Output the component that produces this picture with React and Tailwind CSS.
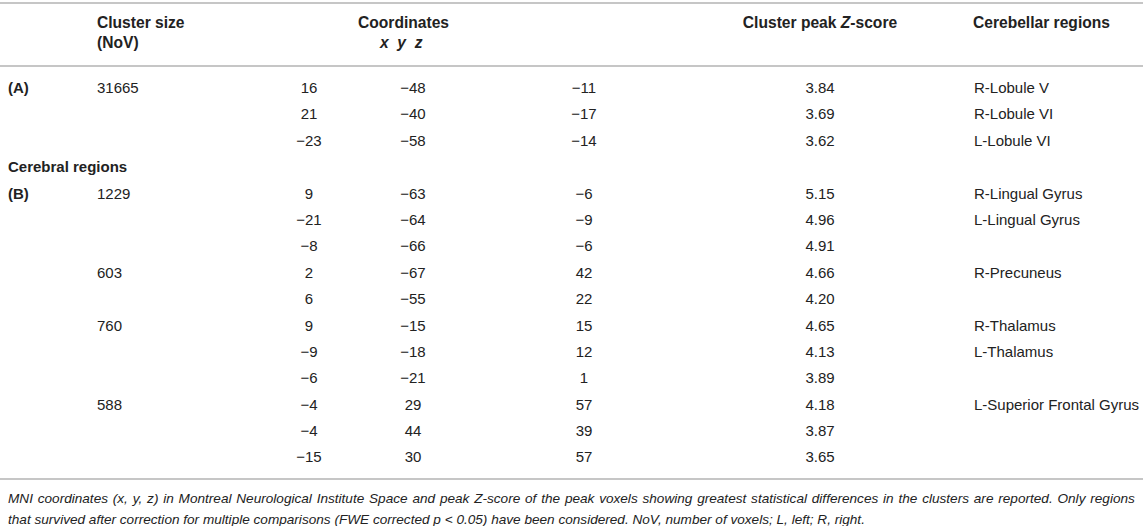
import React from 'react';

const M = '\u2212';

const rows = [
  { label: '(A)', size: '31665', x: '16', y: `${M}48`, z: `${M}11`, score: '3.84', region: 'R-Lobule V' },
  { x: '21', y: `${M}40`, z: `${M}17`, score: '3.69', region: 'R-Lobule VI' },
  { x: `${M}23`, y: `${M}58`, z: `${M}14`, score: '3.62', region: 'L-Lobule VI' },
  { section: 'Cerebral regions' },
  { label: '(B)', size: '1229', x: '9', y: `${M}63`, z: `${M}6`, score: '5.15', region: 'R-Lingual Gyrus' },
  { x: `${M}21`, y: `${M}64`, z: `${M}9`, score: '4.96', region: 'L-Lingual Gyrus' },
  { x: `${M}8`, y: `${M}66`, z: `${M}6`, score: '4.91' },
  { size: '603', x: '2', y: `${M}67`, z: '42', score: '4.66', region: 'R-Precuneus' },
  { x: '6', y: `${M}55`, z: '22', score: '4.20' },
  { size: '760', x: '9', y: `${M}15`, z: '15', score: '4.65', region: 'R-Thalamus' },
  { x: `${M}9`, y: `${M}18`, z: '12', score: '4.13', region: 'L-Thalamus' },
  { x: `${M}6`, y: `${M}21`, z: '1', score: '3.89' },
  { size: '588', x: `${M}4`, y: '29', z: '57', score: '4.18', region: 'L-Superior Frontal Gyrus' },
  { x: `${M}4`, y: '44', z: '39', score: '3.87' },
  { x: `${M}15`, y: '30', z: '57', score: '3.65' },
];

const cols = 'grid grid-cols-[97px_153px_118px_90px_252px_220px_1fr]';

const App = () => {
  return (
    <div className="w-[1143px] h-[526px] bg-white text-[#222] text-[15px] font-['Liberation_Sans',Arial,sans-serif] overflow-hidden">
      <div className="mt-[2px] border-t-2 border-[#c6c6c6]" />

      {/* Header */}
      <div className={`${cols} text-[15.6px] font-bold leading-[20px] pt-[9px] pb-[12px] border-b-2 border-[#c6c6c6]`}>
        <div />
        <div>
          Cluster size
          <br />
          (NoV)
        </div>
        <div className="col-span-3 pl-[108px]">
          Coordinates
          <br />
          <span className="italic pl-[22px] whitespace-pre">x  y  z</span>
        </div>
        <div className="text-center">
          Cluster peak <span className="italic">Z</span>-score
        </div>
        <div className="pl-[43px]">Cerebellar regions</div>
      </div>

      {/* Body */}
      <div className="pt-[8px] pb-[7px] border-b-2 border-[#c6c6c6]">
        {rows.map((r, i) =>
          r.section ? (
            <div key={i} className="h-[26.4px] leading-[26.4px] pl-2 font-bold">
              {r.section}
            </div>
          ) : (
            <div key={i} className={`${cols} h-[26.4px] leading-[26.4px]`}>
              <div className="pl-2 font-bold">{r.label}</div>
              <div>{r.size}</div>
              <div className="text-center">{r.x}</div>
              <div className="text-center">{r.y}</div>
              <div className="text-center">{r.z}</div>
              <div className="text-center">{r.score}</div>
              <div className="pl-[44px] whitespace-nowrap">{r.region}</div>
            </div>
          )
        )}
      </div>

      {/* Footnote */}
      <div className="pl-2 pr-2 pt-[8px] text-[13.6px] italic leading-[21px]">
        <div className="text-justify [text-align-last:justify] whitespace-nowrap flex justify-between">
          {'MNI coordinates (x, y, z) in Montreal Neurological Institute Space and peak Z-score of the peak voxels showing greatest statistical differences in the clusters are reported. Only regions'
            .split(' ')
            .map((w, i) => (
              <span key={i}>{w}</span>
            ))}
        </div>
        <div className="whitespace-nowrap">
          that survived after correction for multiple comparisons (FWE corrected p &lt; 0.05) have been considered. NoV, number of voxels; L, left; R, right.
        </div>
      </div>
    </div>
  );
};

export default App;
